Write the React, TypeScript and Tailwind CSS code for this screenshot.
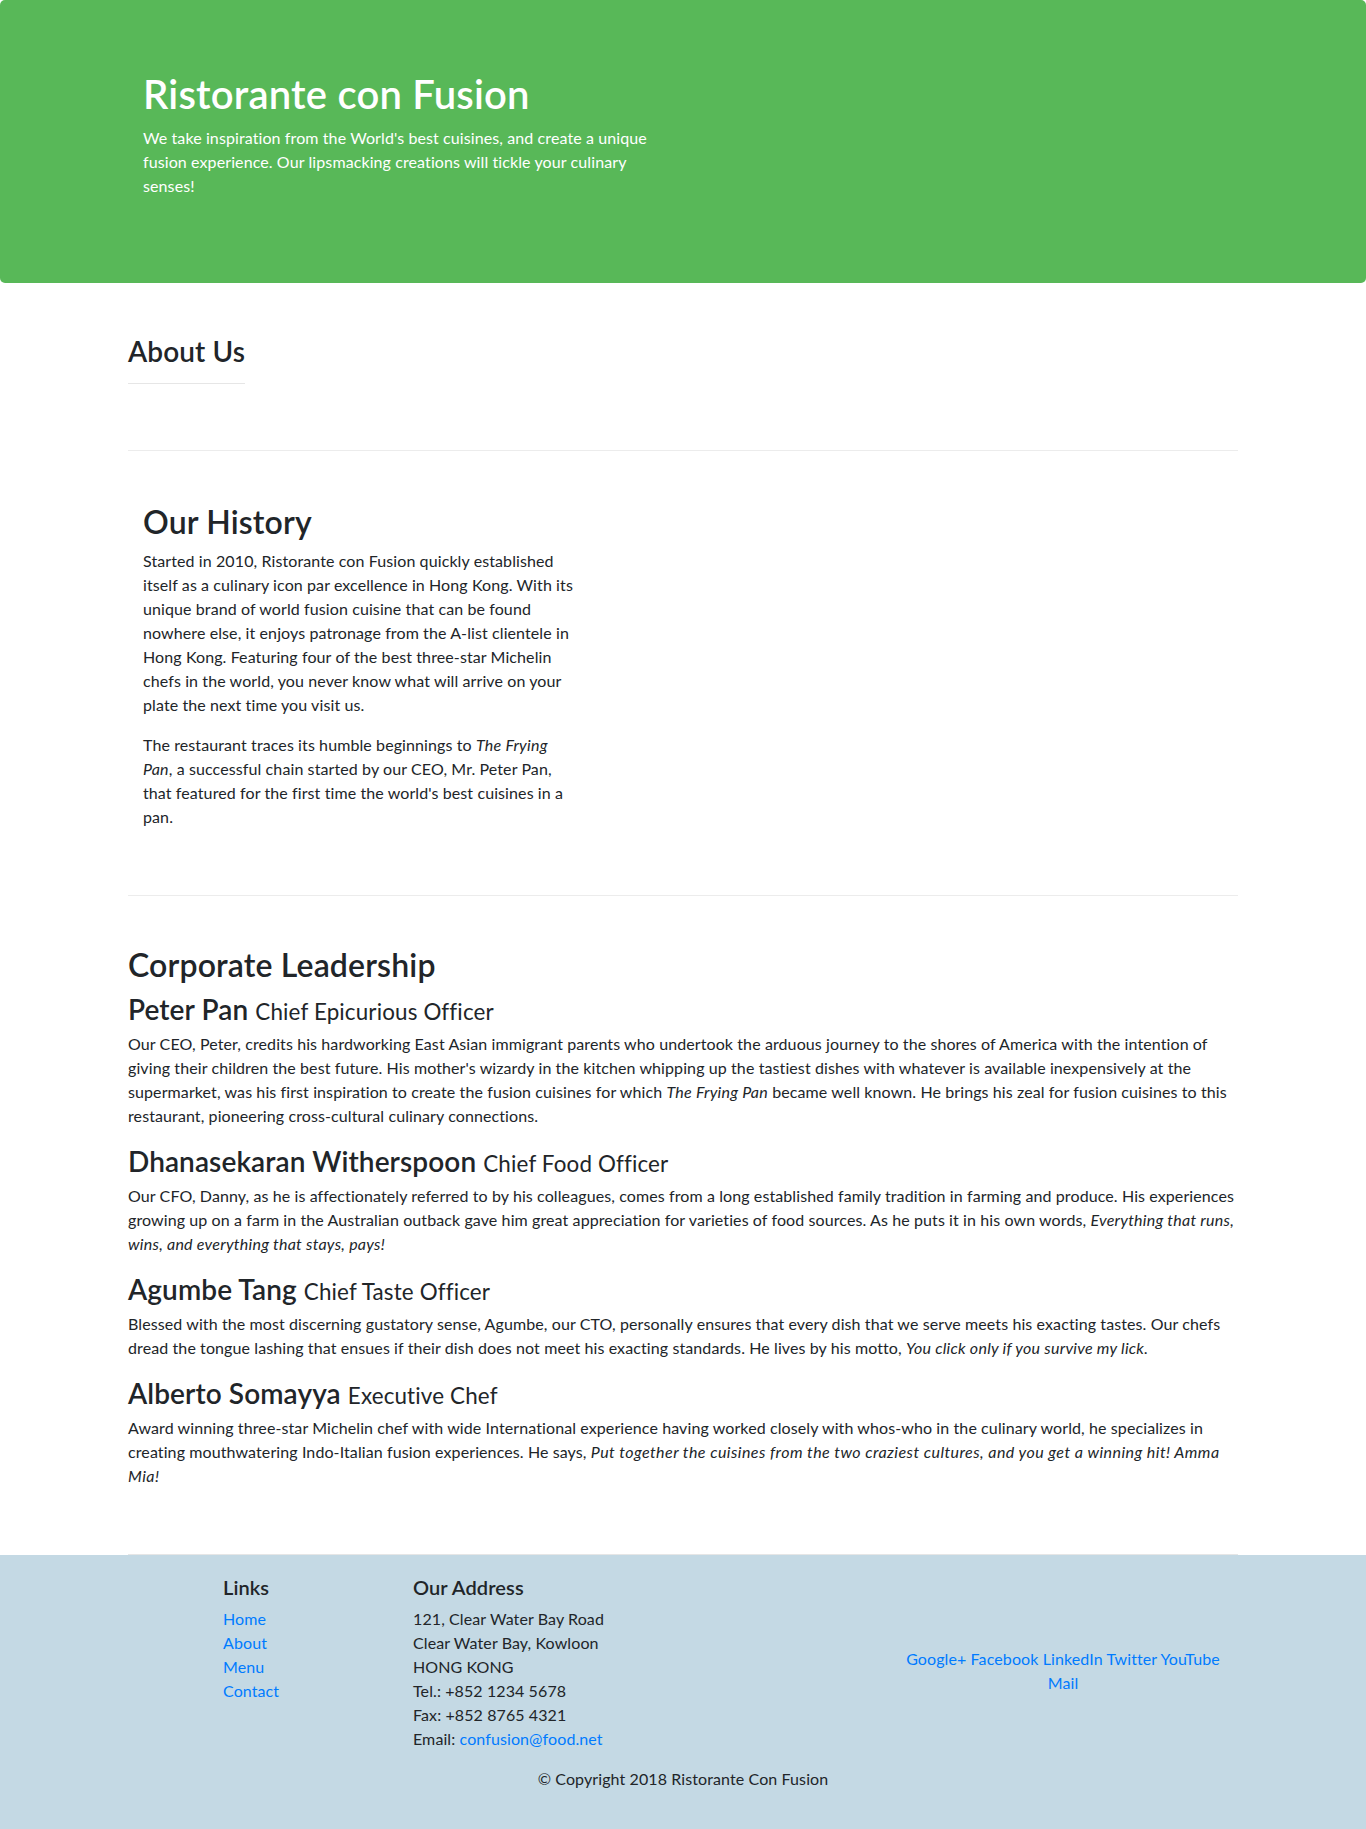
const font = "font-['Lato','Noto_Sans',sans-serif]";

const Em = ({ children, wide }: { children: React.ReactNode; wide?: boolean }) => (
  <em className={wide ? 'tracking-[0.45px]' : 'tracking-[0.25px]'}>{children}</em>
);

const leaders = [
  {
    name: 'Peter Pan',
    title: 'Chief Epicurious Officer',
    body: (
      <>
        Our CEO, Peter, credits his hardworking East Asian immigrant parents who undertook the arduous journey to the
        shores of America with the intention of giving their children the best future. His mother's wizardy in the
        kitchen whipping up the tastiest dishes with whatever is available inexpensively at the supermarket, was his
        first inspiration to create the fusion cuisines for which <Em>The Frying Pan</Em> became well known. He brings
        his zeal for fusion cuisines to this restaurant, pioneering cross-cultural culinary connections.
      </>
    ),
  },
  {
    name: 'Dhanasekaran Witherspoon',
    title: 'Chief Food Officer',
    body: (
      <>
        Our CFO, Danny, as he is affectionately referred to by his colleagues, comes from a long established family
        tradition in farming and produce. His experiences growing up on a farm in the Australian outback gave him great
        appreciation for varieties of food sources. As he puts it in his own words,{' '}
        <Em>Everything that runs, wins, and everything that stays, pays!</Em>
      </>
    ),
  },
  {
    name: 'Agumbe Tang',
    title: 'Chief Taste Officer',
    body: (
      <>
        Blessed with the most discerning gustatory sense, Agumbe, our CTO, personally ensures that every dish that we
        serve meets his exacting tastes. Our chefs dread the tongue lashing that ensues if their dish does not meet his
        exacting standards. He lives by his motto, <Em>You click only if you survive my lick.</Em>
      </>
    ),
  },
  {
    name: 'Alberto Somayya',
    title: 'Executive Chef',
    body: (
      <>
        Award winning three-star Michelin chef with wide International experience having worked closely with
        whos-who in the culinary world, he specializes in creating mouthwatering Indo-Italian fusion experiences. He
        says,{' '}
        <Em wide>Put together the cuisines from the two craziest cultures, and you get a winning hit! Amma Mia!</Em>
      </>
    ),
  },
];

const socials = ['Google+', 'Facebook', 'LinkedIn', 'Twitter', 'YouTube', 'Mail'];

export default function App() {
  return (
    <div
      className={`${font} flex min-h-[1829px] flex-col bg-white text-[16px] leading-[24px] tracking-[0.1px] text-[#212529]`}
    >
      <header className="h-[283px] rounded-[5px] bg-[#58b858] pt-[70px] text-white">
        <div className="mx-auto w-[1140px] px-[30px]">
          <h1 className="mb-[8px] text-[40px] leading-[48px] font-semibold tracking-[0.2px]">Ristorante con Fusion</h1>
          <p className="w-[515px]">
            We take inspiration from the World's best cuisines, and create a unique fusion experience. Our
            lipsmacking creations will tickle your culinary senses!
          </p>
        </div>
      </header>

      <main className="mx-auto w-[1140px] px-[15px]">
        <div className="w-fit pt-[51px]">
          <h3 className="text-[28px] leading-[34px] font-semibold tracking-[0.1px]">About Us</h3>
          <hr className="mt-[15px] border-t border-[#e6e6e6]" />
        </div>

        <div className="mt-[66px] border-t border-[#ececec]" />

        <section className="px-[15px] pt-[52px] pb-[50px]">
          <h2 className="mb-[8px] text-[32px] leading-[38px] font-semibold tracking-[0.15px]">Our History</h2>
          <div className="w-[434px]">
            <p className="mb-[16px]">
              Started in 2010, Ristorante con Fusion quickly established itself as a culinary icon par excellence in
              Hong Kong. With its unique brand of world fusion cuisine that can be found nowhere else, it enjoys
              patronage from the A-list clientele in Hong Kong. Featuring four of the best three-star Michelin chefs
              in the world, you never know what will arrive on your plate the next time you visit us.
            </p>
            <p className="mb-[16px]">
              The restaurant traces its humble beginnings to <Em>The Frying Pan</Em>, a successful chain started by
              our CEO, Mr. Peter Pan, that featured for the first time the world's best cuisines in a pan.
            </p>
          </div>
        </section>

        <div className="border-t border-[#ececec]" />

        <section className="pt-[50px] pb-[50px]">
          <h2 className="mb-[8px] text-[32px] leading-[38px] font-semibold tracking-[0.15px]">Corporate Leadership</h2>
          {leaders.map((l) => (
            <div key={l.name} className="mb-[16px]">
              <h3 className="mb-[3px] text-[28px] leading-[34px] font-semibold tracking-[0.1px]">
                {l.name} <small className="text-[22.4px] font-normal tracking-[0.15px]">{l.title}</small>
              </h3>
              <p>{l.body}</p>
            </div>
          ))}
        </section>

        <div className="border-t border-[#e6e6e6]" />
      </main>

      <footer className="flex-1 bg-[#c4d9e4] pt-[20px] pb-[36px]">
        <div className="mx-auto w-[1140px]">
          <div className="flex">
            <div className="ml-[95px] w-[190px] px-[15px]">
              <h5 className="mb-[8px] text-[20px] leading-[24px] font-semibold">Links</h5>
              <ul>
                {['Home', 'About', 'Menu', 'Contact'].map((t) => (
                  <li key={t}>
                    <a href="#" className="text-[#007bff]">
                      {t}
                    </a>
                  </li>
                ))}
              </ul>
            </div>
            <div className="w-[475px] px-[15px]">
              <h5 className="mb-[8px] text-[20px] leading-[24px] font-semibold">Our Address</h5>
              <address className="mb-[16px] not-italic">
                121, Clear Water Bay Road
                <br />
                Clear Water Bay, Kowloon
                <br />
                HONG KONG
                <br />
                Tel.: +852 1234 5678
                <br />
                Fax: +852 8765 4321
                <br />
                Email:{' '}
                <a href="#" className="text-[#007bff]">
                  confusion@food.net
                </a>
              </address>
            </div>
            <div className="flex w-[380px] items-center justify-center px-[15px]">
              <div className="w-[330px] text-center">
                {socials.map((s, i) => (
                  <span key={s}>
                    <a href="#" className="text-[#007bff]">
                      {s}
                    </a>
                    {i < socials.length - 1 ? ' ' : ''}
                  </span>
                ))}
              </div>
            </div>
          </div>
          <p className="text-center">© Copyright 2018 Ristorante Con Fusion</p>
        </div>
      </footer>
    </div>
  );
}
